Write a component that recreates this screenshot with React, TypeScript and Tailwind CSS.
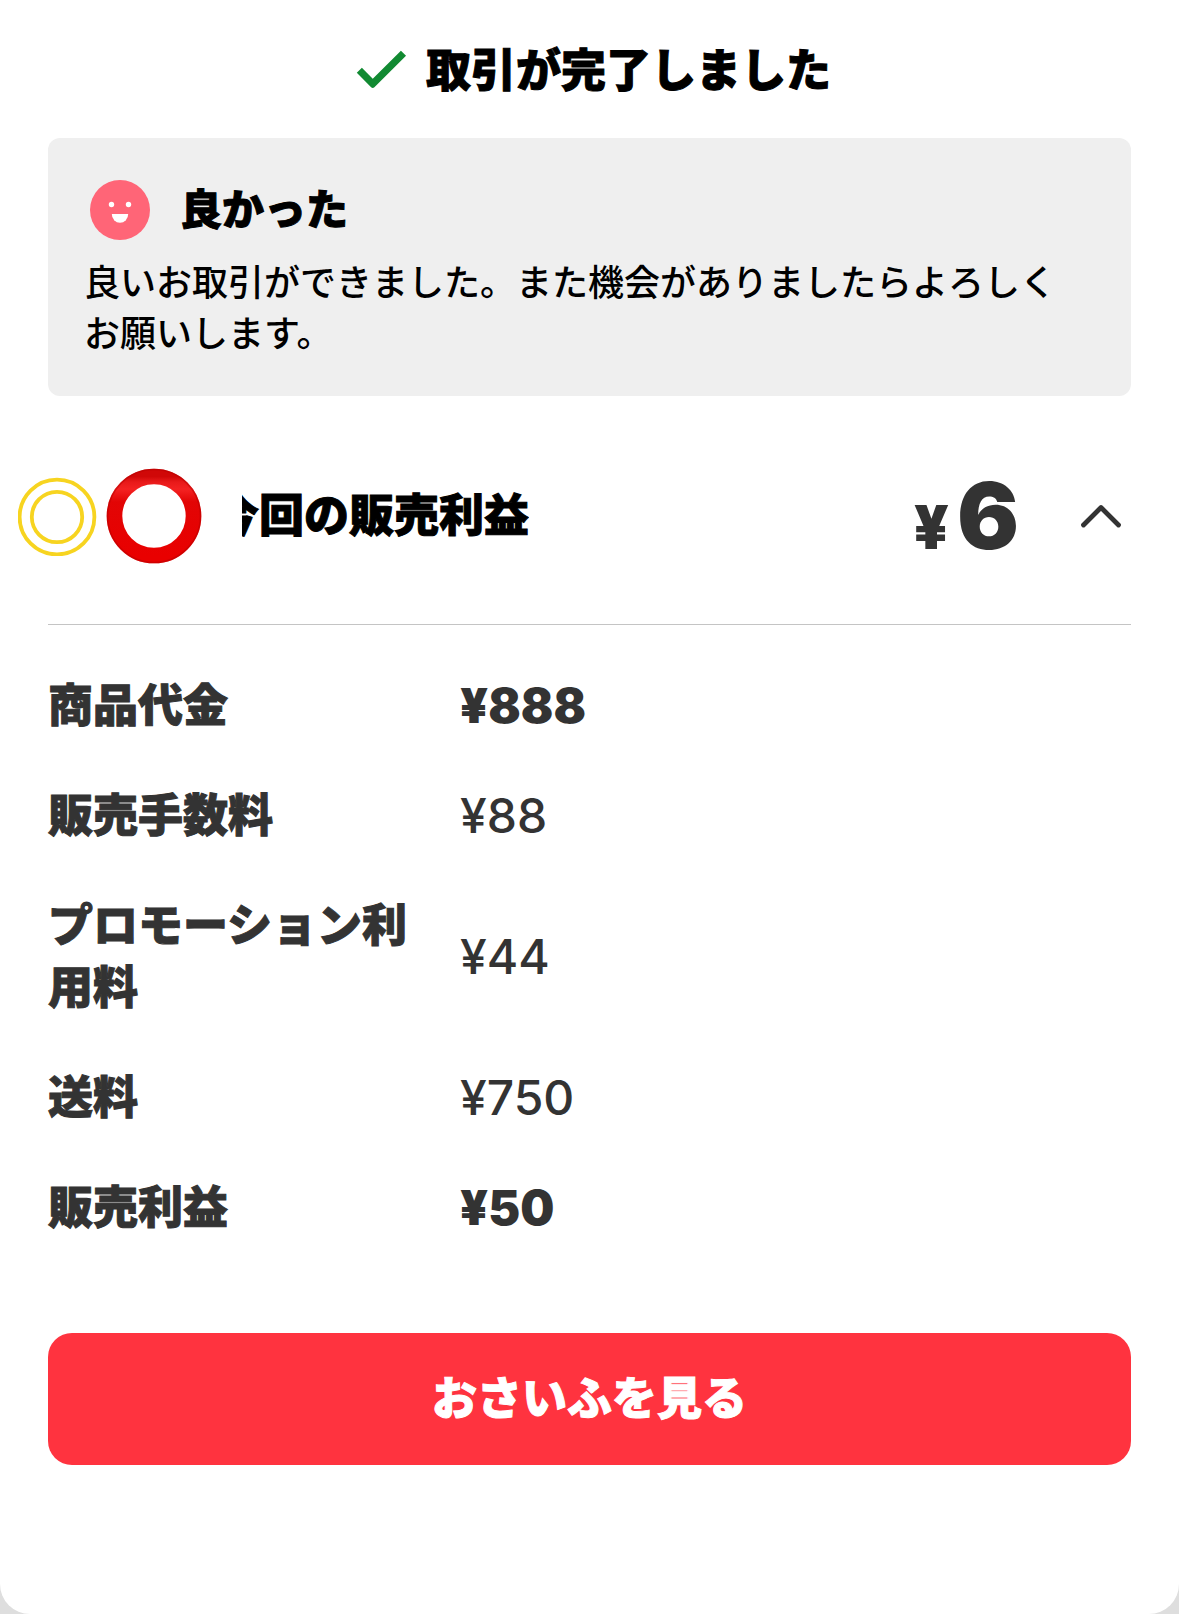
import { useState } from 'react';

type Row = {
  label: string;
  value: string;
  strong?: boolean;
};

const rows: Row[] = [
  { label: '商品代金', value: '¥888', strong: true },
  { label: '販売手数料', value: '¥88' },
  { label: 'プロモーション利用料', value: '¥44' },
  { label: '送料', value: '¥750' },
  { label: '販売利益', value: '¥50', strong: true },
];

function CheckIcon() {
  return (
    <svg className="w-[66px] h-[66px] shrink-0 self-start" viewBox="0 0 24 24" fill="#118a32" aria-hidden="true">
      <path d="M9 15.5 5.05 11.55 3.2 13.4l5.2 5.2a.85.85 0 0 0 1.2 0L21.1 7.2l-1.85-1.85z" />
    </svg>
  );
}

function SmileIcon() {
  return (
    <svg className="w-[72px] h-[72px] shrink-0" viewBox="0 0 72 72" aria-hidden="true">
      <circle cx="36" cy="36" r="30" fill="#ff6577" />
      <circle cx="27.5" cy="30.5" r="2.7" fill="#fff" />
      <circle cx="44.5" cy="30.5" r="2.7" fill="#fff" />
      <path d="M27.8 40h16.4a8.2 8.8 0 0 1-16.4 0z" fill="#fff" />
    </svg>
  );
}

function DoubleRing() {
  return (
    <svg className="w-20 h-20 shrink-0" viewBox="0 0 80 80" fill="none" stroke="#f7d420" strokeWidth="3.8" aria-hidden="true">
      <circle cx="39" cy="41" r="37.4" />
      <circle cx="39" cy="41" r="25.2" />
    </svg>
  );
}

function RedRing() {
  return (
    <svg className="w-24 h-24 shrink-0" viewBox="0 0 96 96" fill="none" aria-hidden="true">
      <defs>
        <linearGradient id="ring" x1="0" y1="0" x2="0" y2="1">
          <stop offset="0" stopColor="#d00808" />
          <stop offset="0.07" stopColor="#e81a1a" />
          <stop offset="0.16" stopColor="#f42222" />
          <stop offset="0.32" stopColor="#e20505" />
          <stop offset="1" stopColor="#e90000" />
        </linearGradient>
      </defs>
      <circle cx="48" cy="48" r="39.5" stroke="url(#ring)" strokeWidth="15.6" />
      <circle cx="48" cy="48" r="46.5" stroke="#b80000" strokeOpacity="0.5" strokeWidth="1.6" />
    </svg>
  );
}

function ChevronIcon({ open }: { open: boolean }) {
  return (
    <svg
      className={open ? 'w-[60px] h-[60px]' : 'w-[60px] h-[60px] rotate-180'}
      viewBox="0 0 60 60"
      fill="none"
      stroke="#333"
      strokeWidth="4.8"
      strokeLinecap="round"
      strokeLinejoin="round"
      aria-hidden="true"
    >
      <path d="M12.5 39 30 21.5 47.5 39" />
    </svg>
  );
}

export default function App() {
  const [open, setOpen] = useState(true);

  return (
    <div className="bg-[#dedede] min-h-screen font-['Inter','Noto_Sans_CJK_JP',sans-serif]">
      <main className="min-h-screen bg-white rounded-b-[30px] text-black">
        <h1 className="flex items-center justify-center gap-3 pt-9 text-[45px] leading-[70px] font-black [-webkit-text-stroke:1px]">
          <CheckIcon />
          取引が完了しました
        </h1>

        <section className="mx-12 mt-8 py-9 pl-9 pr-12 bg-[#efefef] rounded-xl">
          <h2 className="flex items-center gap-6 text-[42px] leading-[72px] font-black [-webkit-text-stroke:1px]">
            <SmileIcon />
            良かった
          </h2>
          <p className="mt-3 text-[36px] leading-[51px] font-medium">
            良いお取引ができました。また機会がありましたらよろしくお願いします。
          </p>
        </section>

        <div className="flex items-center pt-18 pb-15 pl-[18px] pr-12">
          <div className="flex items-center gap-2">
            <DoubleRing />
            <RedRing />
          </div>
          <h2 className="ml-10 overflow-hidden text-[45px] leading-[66px] font-black whitespace-nowrap [-webkit-text-stroke:1px]">
            <span className="-ml-7">今回の販売利益</span>
          </h2>
          <p className="ml-auto flex items-baseline gap-2 text-[#333] font-black leading-none">
            <span className="text-[60px] leading-none">¥</span>
            <span className="text-[92px] leading-none">6</span>
          </p>
          <button type="button" className="ml-13" aria-label="内訳" aria-expanded={open} onClick={() => setOpen(!open)}>
            <ChevronIcon open={open} />
          </button>
        </div>

        <hr className="mx-12 border-[#c4c4c4]" />

        {open && (
          <div className="px-12 pt-[26px]">
            <table className="w-full table-fixed text-[#333] text-[45px] leading-[62px]">
              <tbody>
                {rows.map((row) => (
                  <tr key={row.label}>
                    <th scope="row" className="w-[412px] py-6 pr-12 text-left font-black [-webkit-text-stroke:1px]">
                      {row.label}
                    </th>
                    <td className={row.strong ? 'py-6 text-[48px] font-black' : 'py-6 text-[48px] font-medium'}>
                      {row.value}
                    </td>
                  </tr>
                ))}
              </tbody>
            </table>
          </div>
        )}

        <div className="px-12 pt-[70px] pb-12">
          <button
            type="button"
            className="w-full py-8 bg-[#ff333f] rounded-3xl text-white text-[45px] leading-[68px] font-black [-webkit-text-stroke:1px]"
          >
            おさいふを見る
          </button>
        </div>
      </main>
    </div>
  );
}
